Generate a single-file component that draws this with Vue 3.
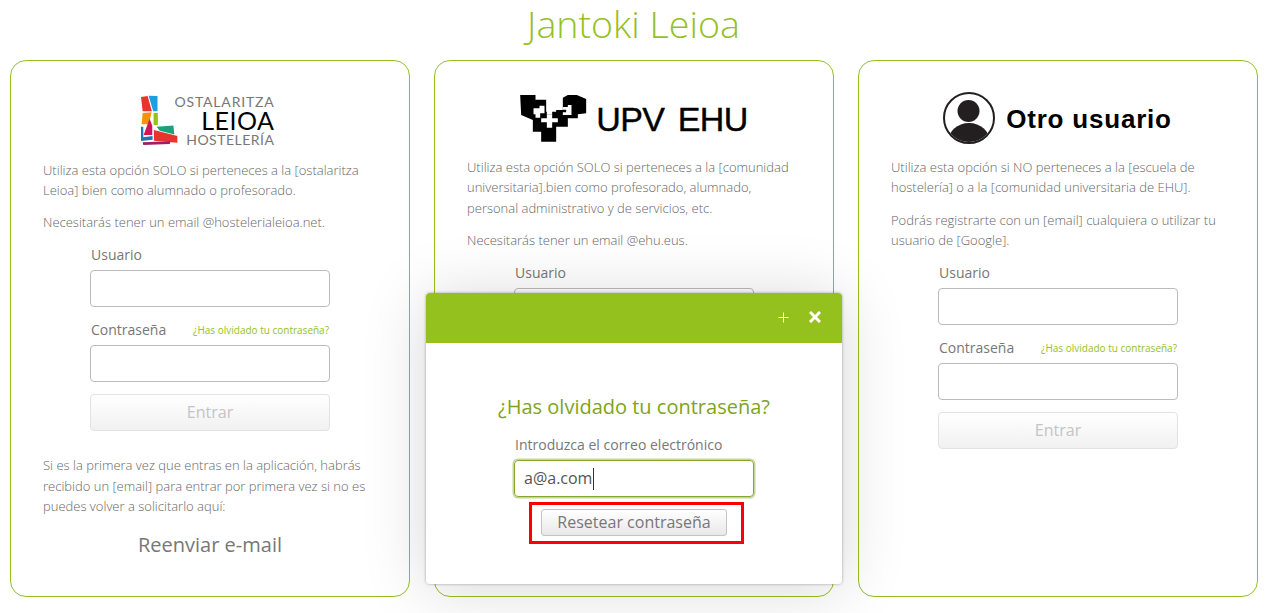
<template>
  <div class="page">
    <h1 class="title">Jantoki Leioa</h1>
    <div class="cards">
      <section class="card">
        <div class="logo logo-leioa">
          <svg class="mark" viewBox="420 284 118 154" width="39" height="51">
            <polygon points="423,290 443,287 456,333 428,333" fill="#e5352d" />
            <polygon points="446,286 473,287 473,333 460,333" fill="#1a9fe0" />
            <polygon points="428,338 455,336 447,372 425,372" fill="#f39314" />
            <polygon points="461,338 474,338 474,375 461,375" fill="#95c11f" />
            <polygon points="449,356 457,376 457,405 431,405" fill="#d4145a" />
            <polygon points="423,380 430,380 430,412 458,408 458,419 423,423" fill="#1b75bb" />
            <polygon points="470,380 521,376 524,403 480,392" fill="#1aa37a" />
            <polygon points="462,390 533,408 533,428 462,422" fill="#e5352d" />
            <polygon points="428,427 512,424 510,432 430,435" fill="#9e1f63" />
          </svg>
          <div class="leioa-text">
            <span class="lt-small">OSTALARITZA</span>
            <span class="lt-big">LEIOA</span>
            <span class="lt-small lt-host">HOSTELERÍA</span>
          </div>
        </div>
        <p>Utiliza esta opción SOLO si perteneces a la [ostalaritza Leioa] bien como alumnado o profesorado.</p>
        <p>Necesitarás tener un email @hostelerialeioa.net.</p>
        <LoginForm />
        <p class="after">Si es la primera vez que entras en la aplicación, habrás recibido un [email] para entrar por primera vez si no es puedes volver a solicitarlo aquí:</p>
        <div class="resend">Reenviar e-mail</div>
      </section>

      <section class="card">
        <div class="logo logo-upv">
          <svg class="shield" viewBox="22 30 200 141" width="67" height="47">
            <path fill="#000" d="M22 30H68V44H100V80H102V88H118V80H130V75H150V38L165 30H192L220 42V85L195 88V100H165V125H130V170H85V140H60V105L25 90Z" />
            <path fill="#fff" d="M62 70H80V62H95V85H82V98H68V88H62Z" />
            <path fill="#fff" d="M85 100H102V88H118V100H135V112H118V128H102V112H85Z" />
            <path fill="#fff" d="M150 66H165V60H176V90H150V82H160V74H150Z" />
          </svg>
          <span class="upv-text">UPV EHU</span>
        </div>
        <p>Utiliza esta opción SOLO si perteneces a la [comunidad universitaria].bien como profesorado, alumnado, personal administrativo y de servicios, etc.</p>
        <p>Necesitarás tener un email @ehu.eus.</p>
        <LoginForm />
      </section>

      <section class="card">
        <div class="logo logo-otro">
          <svg class="avatar" viewBox="0 0 52 52" width="52" height="52">
            <defs>
              <clipPath id="ring"><circle cx="26" cy="26" r="24" /></clipPath>
            </defs>
            <circle cx="26" cy="26" r="25" fill="#fff" stroke="#231f20" stroke-width="2" />
            <circle cx="25.5" cy="19" r="11" fill="#231f20" />
            <ellipse cx="26" cy="50" rx="21" ry="19" fill="#231f20" clip-path="url(#ring)" />
          </svg>
          <span class="otro-text">Otro usuario</span>
        </div>
        <p>Utiliza esta opción si NO perteneces a la [escuela de hostelería] o a la [comunidad universitaria de EHU].</p>
        <p>Podrás registrarte con un [email] cualquiera o utilizar tu usuario de [Google].</p>
        <LoginForm />
      </section>
    </div>

    <div class="modal">
      <div class="modal-head">
        <svg viewBox="0 0 11 11" width="11" height="11">
          <path d="M5.5 0.5V10.5M0.5 5.5H10.5" stroke="#fff" stroke-width="1" fill="none" />
        </svg>
        <svg viewBox="0 0 12 12" width="12" height="12">
          <path d="M1 1L11 11M11 1L1 11" stroke="#fff" stroke-width="3" fill="none" />
        </svg>
      </div>
      <div class="modal-body">
        <h2>¿Has olvidado tu contraseña?</h2>
        <label class="mail-label">Introduzca el correo electrónico</label>
        <div class="mail-input"><span class="mail-value">a@a.com</span><i class="caret"></i></div>
        <div class="red-box">
          <button class="reset">Resetear contraseña</button>
        </div>
      </div>
    </div>
  </div>
</template>

<script setup>
import { h } from "vue"

// the same three-field form sits in every card
const LoginForm = () =>
  h("form", { class: "form" }, [
    h("div", { class: "row" }, [h("span", { class: "row-label" }, "Usuario")]),
    h("div", { class: "field" }),
    h("div", { class: "row row-pass" }, [
      h("span", { class: "row-label" }, "Contraseña"),
      h("a", { class: "forgot" }, "¿Has olvidado tu contraseña?"),
    ]),
    h("div", { class: "field" }),
    h("div", { class: "enter" }, "Entrar"),
  ])
</script>

<style>
html,
body {
  margin: 0;
  background: #fff;
  overflow: hidden;
}
.form {
  width: 240px;
  margin: 12.4px auto 0;
  color: #777;
  font-size: 14px;
}
.row {
  display: flex;
  justify-content: space-between;
  align-items: center;
  height: 20px;
  margin-bottom: 5px;
  padding: 0 1px;
}
.row-label {
  margin-bottom: 2px;
}
.row-pass {
  margin-top: 13px;
}
.forgot {
  color: #95c11f;
  font-size: 10px;
  font-weight: 400;
  margin-right: 0;
}
.field {
  box-sizing: border-box;
  height: 37px;
  background: #fff;
  border: 1px solid #bbb;
  border-radius: 4px;
}
.enter {
  box-sizing: border-box;
  height: 37px;
  margin-top: 12px;
  line-height: 35px;
  text-align: center;
  font-size: 16px;
  color: #c4c4c4;
  border: 1px solid #e2e2e2;
  border-radius: 4px;
  background: linear-gradient(#fff, #f1f1f1);
}
</style>

<style scoped>
.page {
  position: relative;
  height: 613px;
  font-family: "Open Sans", sans-serif;
  color: #666;
}
.title {
  margin: 0;
  height: 60px;
  padding-right: 14px;
  box-sizing: border-box;
  text-align: center;
  font-size: 37.6px;
  line-height: 48px;
  font-weight: 300;
  color: #95c11f;
}
.cards {
  display: flex;
  gap: 24px;
  padding-left: 10px;
}
.card {
  box-sizing: border-box;
  width: 400px;
  height: 537px;
  padding: 0 32px;
  border: 1px solid #95c11f;
  border-radius: 16px;
  background: #fff;
}
.card p {
  margin: 0 0 12px;
  font-size: 13px;
  line-height: 20.4px;
  font-weight: 300;
}
.card p.after {
  margin: 24px 0 0;
}
.logo {
  display: flex;
  justify-content: center;
  box-sizing: border-box;
}
.logo-leioa {
  height: 98.6px;
  padding: 34px 7px 0 0;
}
.leioa-text {
  display: flex;
  flex-direction: column;
  align-items: flex-end;
  width: 95px;
  font-family: Lato, sans-serif;
  color: #777;
}
.lt-small {
  font-size: 14px;
  line-height: 14px;
  letter-spacing: 0.8px;
  margin-right: -1px;
}
.lt-host {
  letter-spacing: 0.5px;
  margin-top: 1px;
}
.lt-big {
  font-size: 25px;
  line-height: 24px;
  color: #000;
  letter-spacing: 0.5px;
  margin: -1px -1px 0 0;
}
.logo-upv {
  height: 96px;
  padding: 34px 0 0 0;
  gap: 9px;
}
.upv-text {
  font-family: "Liberation Sans", sans-serif;
  font-size: 34px;
  line-height: 36px;
  margin-top: 6px;
  color: #000;
  letter-spacing: -0.6px;
  word-spacing: 4.6px;
  -webkit-text-stroke: 0.4px #000;
  white-space: nowrap;
}
.logo-otro {
  height: 96px;
  padding: 31px 1px 0 0;
  gap: 11px;
}
.otro-text {
  font-family: "Liberation Sans", sans-serif;
  font-size: 26px;
  font-weight: 700;
  line-height: 52px;
  color: #000;
  letter-spacing: 0.8px;
  margin-top: 1px;
  white-space: nowrap;
}
.resend {
  margin-top: 15px;
  text-align: center;
  font-size: 20px;
  line-height: 28px;
  color: #777;
}
.modal {
  position: absolute;
  left: 426px;
  top: 293px;
  width: 416px;
  height: 291px;
  border-radius: 4px;
  background: #fff;
  overflow: hidden;
  box-shadow: 0 0 3px rgba(0, 0, 0, 0.35);
}
.page::after {
  content: "";
  position: absolute;
  left: 426px;
  top: 293px;
  width: 416px;
  height: 291px;
  box-shadow: 0 4px 60px rgba(0, 0, 0, 0.16);
  pointer-events: none;
}
.modal-head {
  box-sizing: border-box;
  display: flex;
  justify-content: flex-end;
  align-items: center;
  gap: 20px;
  height: 50px;
  padding: 0 21px 2px 0;
  background: #95c11f;
}
.modal-body {
  display: flex;
  flex-direction: column;
  align-items: center;
  padding-top: 49px;
}
.modal-body h2 {
  margin: 0;
  font-size: 20px;
  line-height: 30px;
  font-weight: 400;
  color: #7fa31c;
}
.mail-label {
  align-self: flex-start;
  margin: 13px 0 0 89px;
  font-size: 14px;
  line-height: 20px;
  color: #777;
}
.mail-input {
  box-sizing: border-box;
  display: flex;
  align-items: center;
  width: 240px;
  height: 37px;
  margin-top: 5px;
  padding: 0 9px;
  border: 1px solid #86a62c;
  border-radius: 4px;
  box-shadow: 0 0 0 1.5px #c5d69a;
  font-size: 16px;
  color: #555;
}
.mail-value {
  margin-bottom: 2px;
}
.caret {
  display: block;
  width: 1px;
  height: 22px;
  background: #333;
  margin-left: 1px;
}
.red-box {
  box-sizing: border-box;
  display: flex;
  justify-content: center;
  align-items: flex-start;
  width: 215px;
  height: 42px;
  margin: 5px 0 0 5px;
  padding-top: 4px;
  border: 3px solid #f00;
}
.reset {
  box-sizing: border-box;
  flex: none;
  width: 186px;
  height: 27px;
  margin: 0 5px 0 0;
  padding: 0 0 2px;
  font-family: "Open Sans", sans-serif;
  font-size: 16px;
  color: #777;
  border: 1px solid #c4c4c4;
  border-radius: 3px;
  background: linear-gradient(#fff, #e8e8e8);
}
</style>
